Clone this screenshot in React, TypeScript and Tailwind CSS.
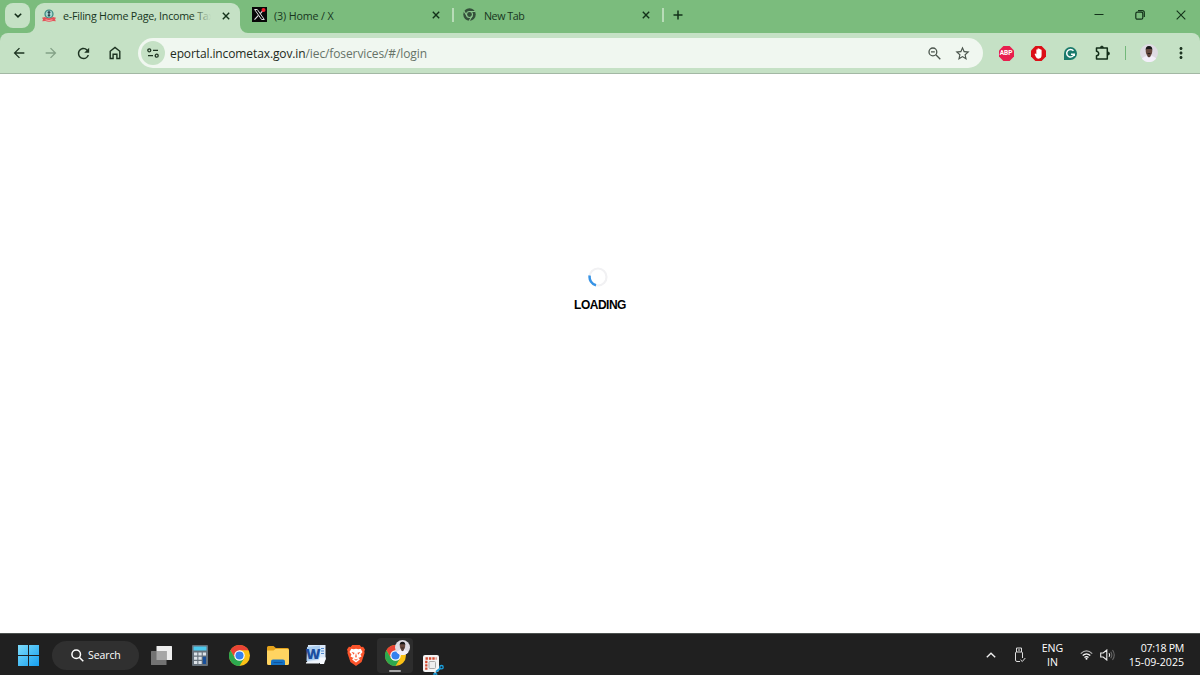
import React from 'react';
import { MdArrowBack, MdArrowForward, MdRefresh, MdStarBorder, MdMoreVert } from 'react-icons/md';

const CloseIcon = ({ className = '' }) => (
  <svg viewBox="0 0 8 8" className={`size-2 shrink-0 ${className}`} fill="none" stroke="#13321a" strokeWidth="1.4">
    <path d="M.8.8 7.2 7.2M7.2.8.8 7.2" />
  </svg>
);

const Emblem = () => (
  <svg viewBox="0 0 14 14" className="size-[14px] shrink-0">
    <circle cx="7" cy="5" r="4" fill="#a5d5cf" stroke="#38877f" strokeWidth="1.2" />
    <path d="M7 1.800v6M5.600 3.300h2.800M5.800 6.300h2.400" stroke="#2b4650" strokeWidth="1.300" />
    <path d="M0 8.800 3 8Q7 10.500 11 8l3 .8-1 1.700.9 1.800-3-.3Q7 13.300 3.300 12l-3.100.3.900-1.800z" fill="#e25358" />
    <path d="M3.500 10.800q3.500 1.500 7 0" stroke="#f6bcbc" strokeWidth=".8" fill="none" />
  </svg>
);

const XLogo = () => (
  <svg viewBox="0 0 15 15" className="size-[15px] shrink-0">
    <rect width="15" height="15" fill="#080808" />
    <path d="m12 2.300-4.200 4.800M6.500 8.300l-4 4.400" stroke="#ddd" strokeWidth="1.200" />
    <path d="M2.600 2.500h2.700l7 10H9.600z" fill="#080808" stroke="#ddd" strokeWidth="1" />
    <circle cx="11.500" cy="3" r="2" fill="#f4212e" />
  </svg>
);

const GrayChrome = () => (
  <svg viewBox="0 0 24 24" className="size-[13px] shrink-0">
    <circle cx="12" cy="12" r="11.500" fill="#34503a" />
    <circle cx="12" cy="12" r="5.500" fill="#34503a" stroke="#8cc68d" strokeWidth="2" />
    <path d="M12 6.500h10.500M7.200 14.700 2 6M16.800 14.700 11.500 23.500" stroke="#8cc68d" strokeWidth="2" />
  </svg>
);

const HomeIcon = () => (
  <svg viewBox="0 0 12 14" className="h-[14px] w-3" fill="none" stroke="#1d3321" strokeWidth="1.400">
    <path d="M1.200 5.300 6 1.500l4.800 3.800v7.200H7.900V8.300H4.100v4.200H1.200z" />
  </svg>
);

const TuneIcon = () => (
  <svg viewBox="0 0 12 10" className="h-[10px] w-3" fill="none" stroke="#1d3321" strokeWidth="1.300">
    <circle cx="2.300" cy="2.300" r="1.500" />
    <path d="M6 2.300h5M1 7.700h5" />
    <circle cx="9.700" cy="7.700" r="1.500" />
  </svg>
);

const ZoomOutIcon = () => (
  <svg viewBox="0 0 13 13" className="mr-[13px] ml-auto size-[13px]" fill="none" stroke="#4b554d" strokeWidth="1.300">
    <circle cx="4.900" cy="4.900" r="3.900" />
    <path d="m7.800 7.800 4.500 4.500M3 4.900h3.800" />
  </svg>
);

const AbpIcon = () => (
  <div className="relative flex size-[15px] items-center justify-center">
    <svg viewBox="0 0 16 16" className="absolute inset-0 size-[15px]">
      <path d="M4.700 0h6.600L16 4.700v6.600L11.300 16H4.700L0 11.300V4.700z" fill="#e81e4e" />
    </svg>
    <span className="relative font-['Roboto'] text-[6.5px] leading-[8px] font-bold text-white">ABP</span>
  </div>
);

const HandIcon = () => (
  <svg viewBox="0 0 16 16" className="size-[15px]">
    <path d="M4.700 0h6.600L16 4.700v6.600L11.300 16H4.700L0 11.300V4.700z" fill="#dc0f17" />
    <path d="M3.800 8.600 5 8l.7 1V4a.7.7 0 0 1 1.300 0V3a.7.7 0 0 1 1.400 0v.5a.7.7 0 0 1 1.400 0v.8a.7.7 0 0 1 1.500.1v5.300q0 3.800-3.200 3.800-2.200 0-3-2z" fill="#fff" />
  </svg>
);

const GrammarlyIcon = () => (
  <svg viewBox="0 0 14 14" className="size-[13px]">
    <path d="M7 0a7 7 0 1 1 0 14H0V7a7 7 0 0 1 7-7z" fill="#19796b" />
    <path d="M10.200 4.100A4.100 4.100 0 1 0 11 7.700H7.500M11 7.300v2.500" stroke="#fff" strokeWidth="1.600" fill="none" />
  </svg>
);

const PuzzleIcon = () => (
  <svg viewBox="0 0 16 16" className="ml-[2px] size-4" fill="none" stroke="#122c18" strokeWidth="1.500" strokeLinejoin="round">
    <path d="M1.500 3h10.800v11H1.500v-3.300a2.200 2.200 0 0 0 0-4.400z" />
    <path d="M5.400 2.600a1.500 1.500 0 0 1 3 0zM13 7a1.500 1.500 0 0 1 0 3z" fill="#122c18" strokeWidth=".8" />
  </svg>
);

const Avatar = ({ className = '' }) => (
  <svg viewBox="0 0 18 18" className={className}>
    <circle cx="9" cy="9" r="9" fill="#dedbe3" />
    <path d="M1.800 14.500Q4.200 12.200 7 11.700h4q3.200.5 5.200 2.800A9 9 0 0 1 1.800 14.500z" fill="#f3effa" />
    <path d="M7.300 10h3.400v2.200L9 13.500l-1.700-1.300z" fill="#513a34" />
    <ellipse cx="9" cy="7.300" rx="3.200" ry="4.400" fill="#66483e" />
    <path d="M5.700 6.700Q5.200 2 9 2t3.300 4.700l-.8-1.700h-5z" fill="#1a1718" />
    <path d="M7.500 9.600h3" stroke="#241b1b" />
  </svg>
);

const ChromeLogo = () => (
  <svg viewBox="0 0 48 48" className="size-[21px]">
    <circle cx="24" cy="24" r="24" fill="#fbc116" />
    <path d="M24 12h20.800A24 24 0 0 0 3.200 12l10.400 18z" fill="#ea4335" />
    <path d="M13.600 30 3.200 12A24 24 0 0 0 24 48l10.400-18L24 34z" fill="#2da94f" />
    <circle cx="24" cy="24" r="12" fill="#fff" />
    <circle cx="24" cy="24" r="9.300" fill="#3581ed" />
  </svg>
);

const WindowsLogo = () => (
  <svg viewBox="0 0 21 21" className="size-[21px]">
    <defs>
      <linearGradient id="win" x1="0" y1="0" x2="1" y2="1">
        <stop stopColor="#7ddcfb" />
        <stop offset="1" stopColor="#159ff0" />
      </linearGradient>
    </defs>
    <path d="M0 0h10v10H0zM11 0h10v10H11zM0 11h10v10H0zM11 11h10v10H11z" fill="url(#win)" />
  </svg>
);

const TaskViewIcon = () => (
  <svg viewBox="0 0 21 19" className="h-[19px] w-[21px]">
    <rect x="5.500" width="15.500" height="14" rx=".5" fill="#eeeeee" />
    <rect y="5" width="15.500" height="14" rx=".5" fill="#737373" />
    <path d="M5.500 5h10v9h-10z" fill="#a6a6a6" />
  </svg>
);

const CalculatorIcon = () => (
  <svg viewBox="0 0 16 21" className="h-[21px] w-4">
    <rect width="16" height="21" rx="1" fill="#66717b" />
    <rect x="1.500" y="1.500" width="13" height="4" fill="#4cc9ed" />
    <path d="M2 7.500h3.300v3H2zM6.400 7.500h3.300v3H6.400zM10.800 7.500H14v3h-3.200zM2 11.700h3.300v3H2zM6.400 11.700h3.300v3H6.400zM2 16h3.300v3H2zM6.400 16h3.300v3H6.400z" fill="#dce3e9" />
    <path d="M10.800 11.700H14V19h-3.200z" fill="#164e99" />
  </svg>
);

const FolderIcon = () => (
  <svg viewBox="0 0 22 19" className="h-[19px] w-[22px]">
    <path d="M0 1.500Q0 0 1.500 0h5l2.300 2H20.500Q22 2 22 3.500V9H0z" fill="#e5a31b" />
    <path d="M0 4.500h6.500L8.500 3H20.500Q22 3 22 4.500V17.500Q22 19 20.500 19h-19Q0 19 0 17.500z" fill="#ffd461" />
    <path d="M4 19v-3.500Q4 13.500 6 13.500h10q2 0 2 2V19z" fill="#1673c5" />
    <path d="M6.500 16.500h9" stroke="#11549d" />
  </svg>
);

const WordIcon = () => (
  <div className="relative h-[19px] w-5">
    <svg viewBox="0 0 20 19" className="h-[19px] w-5">
      <path d="M2 0h17.500v15L16 18H1z" fill="#dbe9f9" />
      <path d="M1 2 14 .5V14L.5 16z" fill="#a9cdf0" />
      <path d="M15 3.500h3M15 6h3M15 8.500h3" stroke="#4f87cd" />
      <path d="M0 17.200 14 15l-1 3.500H0z" fill="#f2f7fd" />
      <path d="M13 12.500h7L18 19h-4z" fill="#f7faff" />
    </svg>
    <span className="absolute top-0 left-0 text-[14px] leading-[17px] font-extrabold text-[#1c4f9f]">W</span>
  </div>
);

const BraveIcon = () => (
  <svg viewBox="0 0 18 21" className="h-[21px] w-[18px]">
    <path d="M5.300 0h7.400l1.700 2 1.700-.2L18 4.500l-.7 2 .3 1.500-3 9L9 21l-5.600-4-3-9 .3-1.500L0 4.500l1.900-2.700 1.700.2z" fill="#fb542b" />
    <path d="m4.300 3.700 2.400.6L9 3.800l2.300.5 2.400-.6 1.800 3.200-2 2.600 1 2-2.500 1.300-.8-.6 1.700 2.200L9 17.500l-3.900-3.100 1.700-2.200-.8.600-2.500-1.300 1-2-2-2.600z" fill="#fff" />
    <path d="m4.500 7 3 .8-.6 2zM13.500 7l-3 .8.6 2zM9 8l.8 3.600L9 13l-.8-1.400zM6.500 13.500 9 14.600l2.500-1.100L9 15.800z" fill="#fb542b" />
  </svg>
);

const SnipIcon = () => (
  <svg viewBox="0 0 22 20" className="h-5 w-[22px]">
    <rect x="1" y="0" width="16" height="17" rx="2" fill="#f4f4f4" />
    <path d="M3.500 3.500h11M4.300 5.800v9" stroke="#d34a30" strokeWidth="2.300" strokeDasharray="2.400 1" />
    <rect x="7" y="6.500" width="6.500" height="7" rx="1" fill="#eee" stroke="#aaa" />
    <path d="m17.500 13.500-5 4.500" stroke="#ddd" strokeWidth="1.300" />
    <circle cx="19.500" cy="12.200" r="1.700" fill="none" stroke="#1aa0df" strokeWidth="1.300" />
    <path d="m18.200 13.500-4.200 3.200M11.500 19.700a1.900 1.900 0 0 1 3.500 0" fill="none" stroke="#1aa0df" strokeWidth="1.700" />
  </svg>
);

const TabStrip = () => (
  <div className="flex h-[33px] items-center bg-[#7bbc7d] text-[10.7px] text-[#17361d]">
    <button className="mb-[3px] ml-[5px] flex size-[25px] items-center justify-center rounded-lg bg-[#c5e1c5]">
      <svg viewBox="0 0 8 5" className="h-[5px] w-2" fill="none" stroke="#132c18" strokeWidth="1.500">
        <path d="m.8.7 3.200 3.200L7.200.7" />
      </svg>
    </button>

    {/* Active Tab */}
    <div className="relative ml-[5px] flex h-[30px] w-[205px] items-center self-end rounded-t-[9px] bg-[#c5e1c5] pb-[5px] pl-[7px]">
      <svg viewBox="0 0 8 8" className="absolute bottom-0 -left-2 size-2"><path d="M8 0v8H0A8 8 0 0 0 8 0z" fill="#c5e1c5" /></svg>
      <svg viewBox="0 0 8 8" className="absolute -right-2 bottom-0 size-2"><path d="M0 0v8H8A8 8 0 0 1 0 0z" fill="#c5e1c5" /></svg>
      <Emblem />
      <span className="relative ml-[7px] w-[149px] pt-[2px] whitespace-nowrap tracking-[-0.24px]">
        e-Filing Home Page, Income Tax
        <span className="absolute inset-y-0 -right-1 w-6 bg-linear-to-r from-transparent to-[#c5e1c5] to-80%" />
      </span>
      <CloseIcon className="ml-[10px]" />
    </div>

    <div className="flex w-[213px] items-center pb-[3px] pl-3">
      <XLogo />
      <span className="ml-[7px] w-[158px] pt-[2px] tracking-[-0.12px]">(3) Home / X</span>
      <CloseIcon />
    </div>
    <div className="mb-[3px] -ml-px h-[14px] w-[2px] bg-[#b8dcb8]" />
    <div className="flex w-[208px] items-center pb-[3px] pl-[9px]">
      <GrayChrome />
      <span className="ml-2 w-[158px] pt-[2px] tracking-[-0.45px]">New Tab</span>
      <CloseIcon />
    </div>
    <div className="mb-[3px] h-[14px] w-[2px] bg-[#b8dcb8]" />
    <svg viewBox="0 0 10 10" className="mb-[3px] ml-[9px] size-[10px]" stroke="#13321a" strokeWidth="1.500"><path d="M5 .5v9M.5 5h9" /></svg>

    {/* Window Controls */}
    <div className="mr-[14px] mb-[3px] ml-auto flex items-center gap-[31px]">
      <svg viewBox="0 0 10 10" className="size-[10px]" stroke="#13321a"><path d="M.5 4.500h9" /></svg>
      <svg viewBox="0 0 10 10" className="size-[10px]" fill="none" stroke="#13321a" strokeWidth="1.200">
        <rect x=".8" y="2.200" width="7" height="7" rx="1.500" />
        <path d="M3 .7h4.300Q9.300.7 9.300 2.700V7" />
      </svg>
      <svg viewBox="0 0 10 10" className="size-[10px]" stroke="#13321a" strokeWidth="1.100"><path d="m.7.700 8.600 8.600M9.300.7.7 9.300" /></svg>
    </div>
  </div>
);

const ToolbarItem = ({ children }: { children: React.ReactNode }) => (
  <div className="flex size-8 shrink-0 items-center justify-center">{children}</div>
);

const Toolbar = () => (
  <div className="bg-[#7bbc7d]">
    <div className="flex h-[41px] items-center rounded-t-lg border-b border-[#a3b8a4] bg-[#c5e1c5] px-[3px] text-[#1d3321]">
      <ToolbarItem><MdArrowBack className="size-4" /></ToolbarItem>
      <ToolbarItem><MdArrowForward className="size-4 text-[#83a186]" /></ToolbarItem>
      <ToolbarItem><MdRefresh className="size-[17px]" /></ToolbarItem>
      <ToolbarItem><HomeIcon /></ToolbarItem>

      <div className="mr-[7px] ml-[7px] flex h-[30px] flex-1 items-center rounded-full bg-[#f0f7f0] pl-[3px]">
        <div className="flex size-6 items-center justify-center rounded-full bg-[#c5e1c5]">
          <TuneIcon />
        </div>
        <span className="ml-[5px] pt-px text-[12px] tracking-[-0.11px] text-[#667368]">
          <span className="text-[#1d2a20]">eportal.incometax.gov.in</span>/iec/foservices/#/login
        </span>
        <ZoomOutIcon />
        <MdStarBorder className="mr-3 size-[17px] text-[#4b554d]" />
      </div>

      <ToolbarItem><AbpIcon /></ToolbarItem>
      <ToolbarItem><HandIcon /></ToolbarItem>
      <ToolbarItem><GrammarlyIcon /></ToolbarItem>
      <ToolbarItem><PuzzleIcon /></ToolbarItem>
      <div className="mx-[7px] h-[14px] w-px bg-[#72b879]" />
      <ToolbarItem><Avatar className="size-[18px]" /></ToolbarItem>
      <ToolbarItem><MdMoreVert className="size-[18px]" /></ToolbarItem>
    </div>
  </div>
);

const Taskbar = () => (
  <div className="flex h-[42px] items-center border-t border-[#4c514e] bg-[#202020] pt-px text-[10.6px] text-white">
    <div className="ml-[18px]"><WindowsLogo /></div>
    <div className="ml-[13px] flex h-[29px] w-[87px] items-center rounded-full bg-[#303030] pl-[19px]">
      <svg viewBox="0 0 13 13" className="size-[13px]" fill="none" stroke="#fff" strokeWidth="1.500">
        <circle cx="5.200" cy="5.200" r="4.300" />
        <path d="m8.300 8.300 4 4" />
      </svg>
      <span className="ml-1 pt-px text-[10.5px] tracking-[-0.1px]">Search</span>
    </div>
    <div className="ml-3"><TaskViewIcon /></div>
    <div className="ml-5"><CalculatorIcon /></div>
    <div className="ml-[21px]"><ChromeLogo /></div>
    <div className="ml-[17px]"><FolderIcon /></div>
    <div className="ml-[17px] -mt-[2px]"><WordIcon /></div>
    <div className="ml-[21px]"><BraveIcon /></div>
    <div className="relative ml-[12px] flex h-[35px] w-[36px] items-center justify-center rounded bg-[#2d2d2d]">
      <ChromeLogo />
      <Avatar className="absolute top-[2px] right-[3px] size-[15px]" />
      <div className="absolute bottom-[1px] left-3 h-[2px] w-3 rounded-full bg-[#a8a8a8]" />
    </div>
    <div className="ml-[9px] self-end"><SnipIcon /></div>

    {/* System Tray */}
    <svg viewBox="0 0 10 6" className="ml-auto h-[6px] w-[10px]" fill="none" stroke="#eee" strokeWidth="1.400"><path d="m.8 5.200 4.200-4 4.200 4" /></svg>
    <svg viewBox="0 0 12 16" className="ml-[18px] h-4 w-3" fill="none" stroke="#ddd">
      <path d="M2.500 5V1h5v4M8.500 11V6q0-1-1-1h-5q-1 0-1 1v7q0 1.500 1.500 1.500h3M4 3h2" />
      <path d="m6.500 12.800 1.800 1.700 3-3.500" />
    </svg>
    <div className="ml-[15px] w-[23px] text-center leading-[14px]">
      <div>ENG</div>
      <div>IN</div>
    </div>
    <svg viewBox="0 0 13 10" className="ml-4 h-[10px] w-[13px]" fill="none" strokeWidth="1.300">
      <path d="M.8 3.600Q6.500-1.800 12.200 3.600" stroke="#b2b2b2" />
      <path d="M2.700 5.600q3.800-3.500 7.600 0M4.500 7.500q2-1.700 4 0" stroke="#fff" />
      <circle cx="6.500" cy="8.700" r="1" fill="#fff" />
    </svg>
    <svg viewBox="0 0 15 12" className="ml-[7px] h-3 w-[15px]" fill="none" stroke="#eee" strokeWidth="1.100">
      <path d="M.7 4h2.500L6.800 1v10L3.200 8H.7zM9 4.300q1.200 1.700 0 3.400" />
      <path d="M10.700 2.700q2.300 3.300 0 6.600M12.500 1q3.500 5 0 10" stroke="#666" />
    </svg>
    <div className="mr-4 ml-2 w-[61px] text-right leading-[14px] whitespace-nowrap">
      <div className="tracking-[-0.3px]">07:18 PM</div>
      <div>15-09-2025</div>
    </div>
  </div>
);

const App = () => {
  return (
    <div className="flex h-[675px] w-[1200px] flex-col overflow-hidden bg-white font-['Open_Sans','Noto_Sans',sans-serif]">
      <TabStrip />
      <Toolbar />
      <main className="flex flex-1 flex-col items-center pt-[193px]">
        <svg viewBox="0 0 20 20" className="mr-1 size-5" fill="none" strokeWidth="2.200">
          <circle cx="10" cy="10" r="8.500" stroke="#f1f1f3" />
          <path d="M1.700 8.500A8.500 8.500 0 0 0 8 18.200" stroke="#3693e6" strokeWidth="2.500" />
        </svg>
        <div className="mt-[9px] font-['Liberation_Sans',sans-serif] text-[12px] leading-[18px] font-bold tracking-[-0.5px] text-black">LOADING</div>
      </main>
      <Taskbar />
    </div>
  );
};

export default App;
